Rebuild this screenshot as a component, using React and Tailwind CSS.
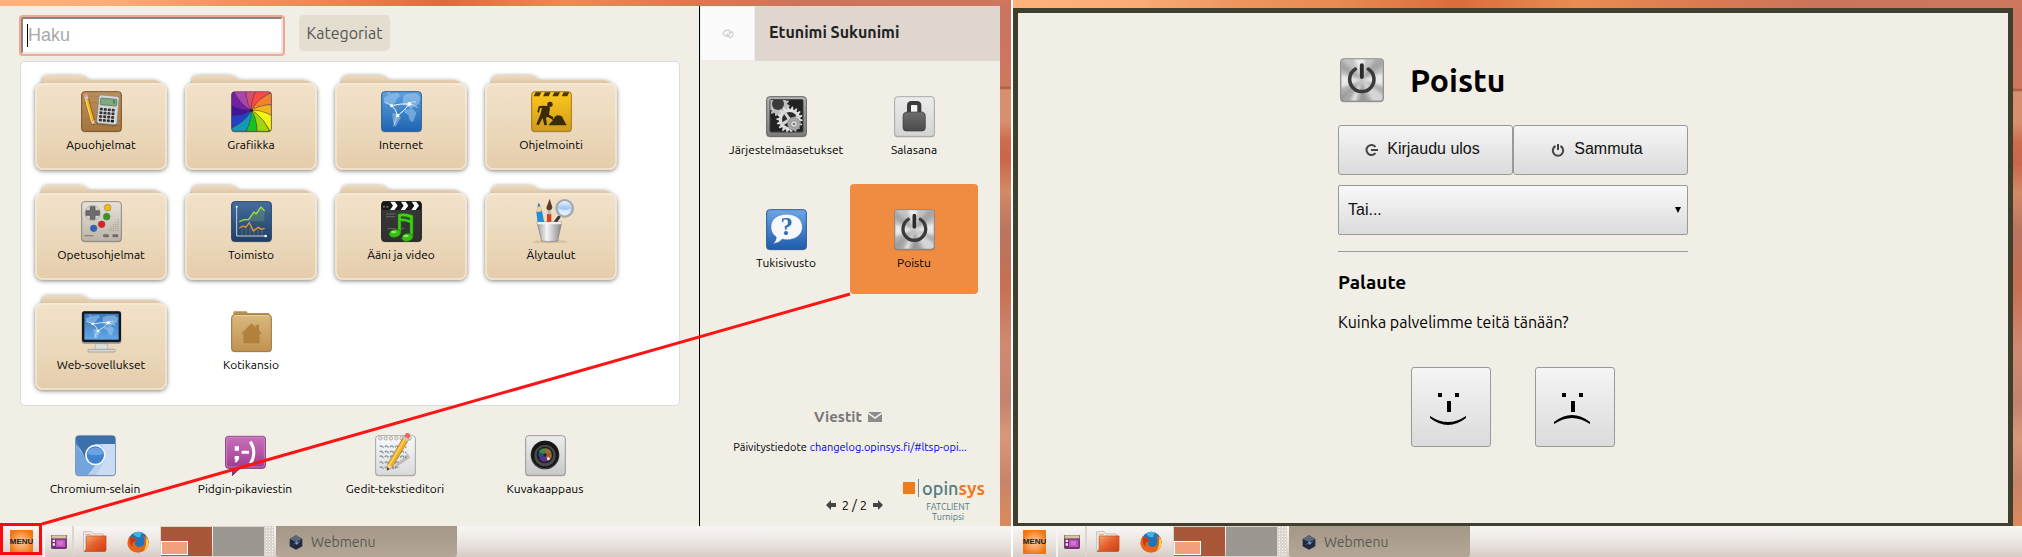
import React from "react";

/* ---------- icon artwork (drawn on a 123 unit square) ---------- */

function Art({ children, className = "h-[41px] w-[41px]" }) {
  return (
    <svg viewBox="0 0 123 123" className={`relative block overflow-visible ${className}`} aria-hidden="true">
      {children}
    </svg>
  );
}

function Tile({ id, from, to, edge = "#777" }) {
  return (
    <>
      <defs>
        <linearGradient id={id} x1="0" y1="0" x2="0" y2="1">
          <stop offset="0" stopColor={from} />
          <stop offset="1" stopColor={to} />
        </linearGradient>
      </defs>
      <rect x="1" y="4" width="121" height="120" rx="10" fill="#000" opacity=".3" />
      <rect x="2" y="2" width="119" height="119" rx="9" fill={`url(#${id})`} stroke={edge} strokeWidth="3" />
    </>
  );
}

function AccessoriesIcon() {
  const keys = [];
  for (let r = 0; r < 4; r++)
    for (let c = 0; c < 4; c++)
      keys.push(<rect key={`${r}${c}`} x={56 + c * 12} y={52 + r * 11} width="9" height="8" rx="2" fill={r === 3 && c === 3 ? "#111" : "#333"} />);
  return (
    <Art>
      <Tile id="acc" from="#b98f5c" to="#a5763f" edge="#77552c" />
      {[18, 37, 88, 104].map((y) => (
        <path key={y} d={`M4 ${y}q30-6 60 0t55 0`} stroke="#8c6233" strokeWidth="2" fill="none" opacity=".5" />
      ))}
      <g transform="rotate(-15 25 55)">
        <rect x="20" y="22" width="11" height="68" fill="#f5b31f" stroke="#7a4a10" strokeWidth="2" />
        <rect x="20" y="22" width="4" height="68" fill="#ffd863" />
        <rect x="20" y="14" width="11" height="9" fill="#c9ccd0" />
        <rect x="20" y="7" width="11" height="9" rx="3" fill="#ef8f83" />
        <path d="M20 90h11l-5 17z" fill="#ecd0a0" />
        <path d="M24 101l4 0-2 6z" fill="#111" />
      </g>
      <g transform="rotate(5 80 60)">
        <rect x="49" y="17" width="62" height="86" rx="6" fill="#5b3f1d" opacity=".6" />
        <rect x="50" y="14" width="61" height="85" rx="6" fill="#d4d6d5" stroke="#8b8b88" strokeWidth="2" />
        <rect x="56" y="23" width="49" height="20" rx="2" fill="#7ea981" stroke="#4c6b50" strokeWidth="2" />
        <path d="M97 28v9M93 28h5" stroke="#2c4730" strokeWidth="2" />
        {keys}
      </g>
    </Art>
  );
}

const WHEEL = ["#d4506f", "#fb4a45", "#f58030", "#f4b31f", "#f5f50f", "#9fd40f", "#15c423", "#1498b8", "#2340c8", "#3f15a0", "#7021a3", "#ab45ad"];

function GraphicsIcon() {
  const p = (deg, r) => {
    const a = (deg * Math.PI) / 180;
    return `${61 + r * Math.sin(a)} ${58 - r * Math.cos(a)}`;
  };
  return (
    <Art>
      <clipPath id="gfx-clip"><rect x="2" y="2" width="119" height="119" rx="8" /></clipPath>
      <rect x="1" y="4" width="121" height="120" rx="10" fill="#000" opacity=".4" />
      <g clipPath="url(#gfx-clip)">
        {WHEEL.map((c, i) => {
          const a = i * 30 - 8;
          return (
            <path key={c} d={`M61 58Q${p(a - 25, 45)} ${p(a, 95)}L${p(a + 30, 110)}Q${p(a + 5, 45)} 61 58z`} fill={c} stroke="#3b2030" strokeWidth="1" />
          );
        })}
      </g>
      <circle cx="61" cy="58" r="5" fill="#222" />
      <rect x="2" y="2" width="119" height="119" rx="9" fill="none" stroke="#4a2b50" strokeWidth="3" opacity=".6" />
    </Art>
  );
}

function WorldNet() {
  return (
    <>
      <path d="M8 22l16-12 26-4 8 8-10 9-4 11-12 9-10-2-12-9zM34 66l16 2 10 12-8 12-8 16-8-14zM66 18l10-9 30-2 12 12-4 20-14 6-10 10-10-8-14-9zM72 56l24-2 10 12-10 28-10-6-4-16-12-8zM16 6l8-3 6 2-8 5z" fill="#a9d0f3" opacity=".5" />
      <g stroke="#fff" strokeWidth="3" fill="none">
        <path d="M32 44q26-7 53-5Q72 58 50 74Q45 54 32 44" />
        <path d="M32 44Q20 36 10 34M85 39q14 2 24 10M50 74q-8 14-12 32M85 39q8-10 20-6" opacity=".6" />
      </g>
      <circle cx="32" cy="44" r="5" fill="#fff" />
      <circle cx="85" cy="39" r="6" fill="#fff" />
      <circle cx="50" cy="74" r="5" fill="#fff" />
    </>
  );
}

function InternetIcon() {
  return (
    <Art>
      <Tile id="net" from="#5da2de" to="#1f64b0" edge="#2b5f9b" />
      <WorldNet />
    </Art>
  );
}

function ProgrammingIcon() {
  return (
    <Art>
      <Tile id="dev" from="#fdc91f" to="#cf9a1a" edge="#a87c17" />
      {[14, 42, 70, 98].map((x) => (
        <path key={x} d={`M${x} 4h17l-6 12h-17z`} fill="#49380c" />
      ))}
      <g fill="#3a2c08">
        <circle cx="57" cy="40" r="8" />
        <path d="M34 44l18 1 5 6-3 20 13 7-2 6-16-6-4 2 3 22-8 1-5-22-12 22-7-3 13-32 4-18-6 2-3 13-5-2 4-17z" />
        <path d="M46 66l22 18-3 3-22-17zM52 103l14-16q6-13 14-14l12 2 15 28z" />
      </g>
    </Art>
  );
}

function LearningIcon() {
  return (
    <Art>
      <Tile id="edu" from="#e6e1da" to="#bcb4a8" edge="#908a80" />
      <circle cx="35" cy="36" r="23" fill="#d8d3ca" stroke="#a49f96" strokeWidth="2" />
      <path d="M28 17h14v12h13v14h-13v12h-14v-12h-13v-14h13z" fill="#6d6d6d" stroke="#4b4b4b" strokeWidth="2" />
      <circle cx="80" cy="20" r="10" fill="#f7b917" stroke="#9f8040" strokeWidth="2" />
      <circle cx="77" cy="47" r="10" fill="#35991b" stroke="#567b46" strokeWidth="2" />
      <circle cx="62" cy="70" r="10" fill="#e22020" stroke="#944545" strokeWidth="2" />
      <circle cx="38" cy="82" r="10" fill="#2a65b3" stroke="#476b92" strokeWidth="2" />
      {[0, 1, 2, 3, 4, 5].map((i) => (
        <path key={i} d={`M${76 + i * 7} ${91 - i * 7}V91`} stroke="#99938a" strokeWidth="3" strokeDasharray="3 3" />
      ))}
      <path d="M10 104h27" stroke="#8b857c" strokeWidth="4" />
      <rect x="66" y="100" width="18" height="9" rx="4" fill="#6e6e72" />
      <rect x="94" y="100" width="18" height="9" rx="4" fill="#6e6e72" />
    </Art>
  );
}

function OfficeIcon() {
  return (
    <Art>
      <Tile id="off" from="#456d9e" to="#203f66" edge="#28456a" />
      <path d="M25 62l14-6 14-1 16-19 5 5 16-20 10 12v28H25z" fill="#7fae6c" opacity=".3" />
      {[33, 45, 57, 69, 81, 93].map((x) => (
        <path key={x} d={`M${x} 82V103`} stroke="#d1a25c" strokeWidth="2" opacity=".55" />
      ))}
      <path d="M17 17V105H105" fill="none" stroke="#c6d5e4" strokeWidth="3" />
      <circle cx="17" cy="17" r="3" fill="#fff" /><circle cx="104" cy="105" r="4" fill="#fff" />
      <path d="M25 62l14-6 14-1 16-22 6 6 15-21 11 12" fill="none" stroke="#a1e03f" strokeWidth="4" />
      <path d="M25 81l11-6 8 4 11-14 12 25 15-11 8 6 11-3" fill="none" stroke="#ee9b24" strokeWidth="4" />
    </Art>
  );
}

function MediaIcon() {
  return (
    <Art>
      <Tile id="med" from="#383838" to="#303030" edge="#202020" />
      <rect x="2" y="1" width="119" height="26" rx="7" fill="#171717" />
      <path d="M28 2h14l8 12-10 13H27l9-13zM60 2h14l8 12-10 13H59l9-13zM92 2h14l8 12-10 13H91l9-13z" fill="#fff" />
      <circle cx="9" cy="17" r="3" fill="#777" /><circle cx="19" cy="17" r="3" fill="#777" />
      <path d="M15 39h28M15 47h28M20 83h26M60 83h10" stroke="#686868" strokeWidth="3" />
      <path fillRule="evenodd" d="M51 39q20-6 45 4v66H87V66Q74 60 60 60V96H51zM60 47v5q14 0 27 5v-6q-13-5-27-4z" fill="#42cf18" stroke="#1b7f0a" strokeWidth="2" />
      <ellipse cx="42" cy="97" rx="18" ry="12" fill="#39bd14" stroke="#176f08" strokeWidth="2" transform="rotate(-12 42 97)" />
      <ellipse cx="79" cy="109" rx="17" ry="12" fill="#39bd14" stroke="#176f08" strokeWidth="2" transform="rotate(-12 79 109)" />
      <ellipse cx="38" cy="93" rx="8" ry="4" fill="#a2f27e" opacity=".8" />
      <ellipse cx="75" cy="105" rx="8" ry="4" fill="#a2f27e" opacity=".8" />
    </Art>
  );
}

function WhiteboardIcon() {
  return (
    <Art>
      <defs>
        <linearGradient id="cup" x1="0" x2="1"><stop offset="0" stopColor="#999" /><stop offset=".4" stopColor="#f5f5f5" /><stop offset="1" stopColor="#858585" /></linearGradient>
        <linearGradient id="lens" x1="0" x2="0" y1="0" y2="1"><stop offset="0" stopColor="#f2f8ff" /><stop offset=".5" stopColor="#9fc7f1" /><stop offset="1" stopColor="#dcebfb" /></linearGradient>
      </defs>
      <ellipse cx="58" cy="122" rx="50" ry="5" fill="#b58f60" opacity=".35" />
      <path d="M16 32l7-26 10 23 7 38H20z" fill="#1f8fd8" />
      <path d="M16 32l7-26 10 23-8 4z" fill="#f2cf98" /><path d="M20 17l3-12 5 10z" fill="#1b6fae" />
      <path d="M48 38h13v28H48z" fill="#e03b17" /><rect x="50" y="26" width="9" height="14" fill="#bbb" />
      <path d="M46 20q4-10 10-27 4 14 8 25 0 9-9 10-9-1-9-8z" fill="#5b3c28" />
      <path d="M84 48L72 64" stroke="#393939" strokeWidth="9" strokeLinecap="round" />
      <circle cx="101" cy="22" r="25" fill="url(#lens)" stroke="#a4a6aa" strokeWidth="6" />
      <path d="M82 22q18 12 38 0-3 20-19 20t-19-20z" fill="#eef5ff" opacity=".7" />
      <path d="M18 63h74l-12 57q-25 4-48 0z" fill="url(#cup)" stroke="#7b7b7b" strokeWidth="2" />
      <path d="M18 63h74l-2 7H20z" fill="#f1f1f1" />
    </Art>
  );
}

function WebAppsIcon() {
  return (
    <Art>
      <defs>
        <linearGradient id="scr" x1="0" x2="0" y1="0" y2="1"><stop offset="0" stopColor="#3877bd" /><stop offset="1" stopColor="#61a7e5" /></linearGradient>
      </defs>
      <path d="M45 98h33l4 18H41z" fill="#dedede" stroke="#a4a4a4" strokeWidth="2" />
      <rect x="21" y="115" width="81" height="8" rx="2" fill="#d8d8d8" stroke="#8d8d8d" strokeWidth="2" />
      <rect x="2" y="1" width="119" height="97" rx="8" fill="#8b8e90" />
      <rect x="3" y="1" width="117" height="92" rx="7" fill="#15181a" />
      <rect x="10" y="8" width="103" height="78" fill="url(#scr)" />
      <g transform="translate(7 8) scale(.88 .7)"><WorldNet /></g>
    </Art>
  );
}

function HomeIcon() {
  return (
    <Art>
      <defs>
        <linearGradient id="home" x1="0" x2="0" y1="0" y2="1"><stop offset="0" stopColor="#d9b77d" /><stop offset="1" stopColor="#c19351" /></linearGradient>
      </defs>
      <path d="M7 16V5q0-4 4-4h34q4 0 5 5h62q5 0 5 10z" fill="#b98f50" />
      <rect x="1" y="16" width="121" height="108" rx="9" fill="#000" opacity=".3" />
      <rect x="2" y="12" width="119" height="109" rx="8" fill="url(#home)" stroke="#a17740" strokeWidth="3" />
      <path d="M9 14h105" stroke="#edd5a8" strokeWidth="3" />
      <path d="M30 68l32-31 12 12v-8h10v17l10 10H86v29H37V68z" fill="#ad7b36" opacity=".85" />
    </Art>
  );
}

function ChromiumIcon() {
  return (
    <Art>
      <Tile id="chr" from="#a9c8ea" to="#b9d2f0" edge="#6b8fbd" />
      <path d="M4 26L36 79 60 92 38 120H11q-8 0-8-8z" fill="#73a5dd" />
      <path d="M3 27V11q0-8 8-8h101q8 0 8 8V27H62q-25 2-29 35z" fill="#447bb3" />
      <path d="M3 12L33 76V60Q35 32 62 27H120V11q0-8-8-8H11q-8 0-8 9z" fill="#3c70a8" />
      <path d="M91 66q0 8-4 15L64 120h48q8 0 8-8V27H78q13 14 13 39z" fill="#c9dcf4" />
      <circle cx="61" cy="60" r="31" fill="#f5f9ff" />
      <circle cx="61" cy="60" r="26" fill="#4283d0" />
      <path d="M36 56a26 26 0 0 1 50 0q-26 10-50 0z" fill="#6aa3e3" />
    </Art>
  );
}

function PidginIcon() {
  return (
    <Art>
      <defs>
        <linearGradient id="pid" x1="0" x2="0" y1="0" y2="1"><stop offset="0" stopColor="#c772b8" /><stop offset=".45" stopColor="#b353a4" /><stop offset="1" stopColor="#8e2f85" /></linearGradient>
      </defs>
      <path d="M10 4h103q8 0 8 8v79q0 9-8 9H45L22 122l2-22H10q-8 0-8-9V12q0-8 8-8z" fill="url(#pid)" stroke="#7f3577" strokeWidth="3" />
      <rect x="5" y="6" width="113" height="90" rx="6" fill="none" stroke="#d79acb" strokeWidth="2" />
      <path d="M29 34h13v13H29zM29 63h13v9l-7 10h-6l3-8h-3zM50 47h22v9H50z" fill="#fff" />
      <path d="M76 20q21 33 0 66" fill="none" stroke="#fff" strokeWidth="9" />
    </Art>
  );
}

function GeditIcon() {
  return (
    <Art>
      <Tile id="ged" from="#fafafa" to="#dadada" edge="#aaa" />
      {[16, 32, 48, 64, 80, 104].map((x) => (
        <circle key={x} cx={x} cy="10" r="5" fill="#f0f0ea" stroke="#aaa69c" strokeWidth="3" />
      ))}
      {[35, 51, 65, 83, 98].map((y, i) => (
        <path key={y} d={`M14 ${y}q4-5 8 0t8 0 8 0 8 0 8 0 8 0 8 0${i < 3 ? " 8 0 8 0 8 0" : ""}`} stroke="#8097a4" strokeWidth="4" fill="none" strokeDasharray="14 4" />
      ))}
      <path d="M47 104L98 55l8 13-53 35z" fill="#000" opacity=".18" />
      <path d="M87 4l15 8-50 84-16 10 2-19z" fill="#f1af2b" stroke="#9d6c1c" strokeWidth="2" />
      <path d="M91 9L43 91" stroke="#ffd96a" strokeWidth="4" />
      <path d="M38 87l14 9-16 10z" fill="#efd5a8" /><path d="M37 97l7 5-8 4z" fill="#222" />
      <path d="M87 4l6-9q9-4 13 5l-4 12z" fill="#e5695e" /><path d="M87 4l15 8-4 7-15-9z" fill="#c7c9cd" />
    </Art>
  );
}

function ScreenshotIcon() {
  return (
    <Art>
      <Tile id="sho" from="#ececec" to="#c9c9c9" edge="#9d9d9d" />
      <circle cx="60" cy="60" r="43" fill="#3d3d3d" />
      <circle cx="60" cy="58" r="41" fill="#171717" />
      <circle cx="60" cy="62" r="32" fill="#4b4b4b" />
      <circle cx="60" cy="60" r="25" fill="#1b1b24" />
      <path d="M60 60L41 52Q46 39 60 40z" fill="#3e8a49" />
      <path d="M60 60V40q16 0 20 15z" fill="#9c6c32" />
      <path d="M60 60L80 55q4 18-12 24z" fill="#a35e35" />
      <path d="M60 60L68 79q-17 5-24-8z" fill="#5e3191" />
      <path d="M60 60L44 71q-6-9-3-19z" fill="#2a4a92" />
      <circle cx="60" cy="60" r="5" fill="#252525" /><circle cx="70" cy="71" r="4" fill="#fff" />
    </Art>
  );
}

function Gear({ cx, cy, r, n, fill }) {
  const pts = [];
  for (let i = 0; i < n * 4; i++) {
    const a = (i / (n * 4)) * Math.PI * 2;
    const rr = i % 4 < 2 ? r : r * 0.8;
    pts.push(`${(cx + rr * Math.cos(a)).toFixed(1)},${(cy + rr * Math.sin(a)).toFixed(1)}`);
  }
  return <polygon points={pts.join(" ")} fill={fill} />;
}

function SettingsIcon() {
  return (
    <Art>
      <Tile id="set" from="#b3b3b3" to="#7c7c7c" edge="#666" />
      <rect x="12" y="11" width="99" height="97" rx="3" fill="#222" stroke="#3d3d3d" strokeWidth="3" />
      <clipPath id="set-clip"><rect x="13" y="12" width="97" height="95" /></clipPath>
      <g clipPath="url(#set-clip)">
        <Gear cx={38} cy={28} r={33} n={14} fill="#bdbdbd" />
        <circle cx="36" cy="24" r="18" fill="#3a3a3a" />
        <Gear cx={71} cy={71} r={40} n={18} fill="#dedede" />
        <circle cx="71" cy="71" r="23" fill="#2b2b2b" />
        <path d="M71 71L55 48M71 71l31-9M71 71L47 85M71 71l11 30" stroke="#d2d2d2" strokeWidth="9" />
        <circle cx="84" cy="84" r="19" fill="#a9a9a9" stroke="#777" strokeWidth="2" />
        <circle cx="84" cy="84" r="10" fill="#dedede" stroke="#777" strokeWidth="2" />
        <circle cx="84" cy="84" r="4" fill="#777" />
      </g>
    </Art>
  );
}

function LockIcon() {
  return (
    <Art>
      <defs>
        <linearGradient id="lok" x1="0" x2="0" y1="0" y2="1"><stop offset="0" stopColor="#6e6e6e" /><stop offset="1" stopColor="#4a4a4a" /></linearGradient>
      </defs>
      <Tile id="lockt" from="#ececec" to="#d4d4d4" edge="#aaa" />
      <path d="M45 50V29q0-8 8-8h15q8 0 8 8V50" fill="#fff" fillOpacity=".6" stroke="#3c3c3c" strokeWidth="12" />
      <path d="M37 48h48q9 2 9 12v35q0 10-10 10H37q-10 0-10-10V60q0-10 10-12z" fill="url(#lok)" stroke="#3c3c3c" strokeWidth="2" />
    </Art>
  );
}

function HelpIcon() {
  return (
    <Art>
      <Tile id="hlp" from="#6da6e2" to="#1e5cad" edge="#2c5c97" />
      <path d="M62 16c28 0 47 15 47 38S90 92 62 92q-7 0-13-2-10 12-28 14 10-8 10-20-16-11-16-30c0-23 19-38 47-38z" fill="#f6f8fc" stroke="#245fa9" strokeWidth="1" />
      <text x="62" y="79" textAnchor="middle" fontFamily="Liberation Serif, serif" fontWeight="700" fontSize="74" fill="#356fb2">?</text>
    </Art>
  );
}

function PowerIcon({ id, className }) {
  return (
    <Art className={className}>
      <Tile id={id} from="#c6c6c6" to="#a6a6a6" edge="#8a8a8a" />
      <clipPath id={`${id}-c`}><rect x="4" y="4" width="115" height="115" rx="7" /></clipPath>
      <filter id={`${id}-b`}><feGaussianBlur stdDeviation="4" /></filter>
      <g clipPath={`url(#${id}-c)`}>
        <g filter={`url(#${id}-b)`}>
          <path d="M61 61L0 45V85zM61 61L123 40V80zM61 61L40 0H70zM61 61L45 123H28z" fill="#fff" opacity=".7" />
          <path d="M61 61L0 0V30zM61 61L100 0h23V20zM61 61L55 123H75zM61 61L0 110v13z" fill="#7a7a7a" opacity=".4" />
          <path d="M61 61L90 123h33V105z" fill="#f4f4f4" opacity=".6" />
        </g>
      </g>
      <path d="M43 31a34 34 0 1 0 36 0" fill="none" stroke="#3a3a3a" strokeWidth="10" strokeLinecap="round" />
      <path d="M61 20V53" stroke="#2b2b2b" strokeWidth="11" strokeLinecap="round" />
    </Art>
  );
}

/* ---------- launcher pieces ---------- */

function FolderShape() {
  return (
    <svg viewBox="0 0 150 110" className="absolute inset-0 h-full w-full overflow-visible" aria-hidden="true">
      <defs>
        <linearGradient id="fold" x1="0" y1="0" x2="0" y2="1"><stop offset="0" stopColor="#f2e2ca" /><stop offset=".5" stopColor="#ecd9bc" /><stop offset="1" stopColor="#e4ccab" /></linearGradient>
        <linearGradient id="foldtab" x1="0" y1="0" x2="0" y2="1"><stop offset="0" stopColor="#eedcc0" /><stop offset="1" stopColor="#d8bf9c" /></linearGradient>
        <filter id="foldsh" x="-10%" y="-10%" width="120%" height="125%"><feDropShadow dx="0" dy="1" stdDeviation="2" floodColor="#000" floodOpacity=".5" /></filter>
      </defs>
      <g filter="url(#foldsh)">
        <path d="M16 20V14q0-5 6-5H53q5 0 10 5H128q6 0 7 6z" fill="url(#foldtab)" />
        <rect x="9" y="17" width="132" height="87" rx="8" fill="url(#fold)" />
      </g>
      <rect x="10" y="18" width="130" height="85" rx="7" fill="none" stroke="#f8ecd8" strokeWidth="1.5" opacity=".8" />
    </svg>
  );
}

function Launcher({ icon, label, folder, className = "w-[150px]" }) {
  return (
    <button type="button" className={`relative flex h-[110px] flex-col items-center pt-[25px] text-[12px] leading-4 text-black ${className}`}>
      {folder && <FolderShape />}
      {icon}
      <span className="relative mt-[5px] whitespace-nowrap">{label}</span>
    </button>
  );
}

const FOLDERS = [
  ["Apuohjelmat", <AccessoriesIcon />],
  ["Grafiikka", <GraphicsIcon />],
  ["Internet", <InternetIcon />],
  ["Ohjelmointi", <ProgrammingIcon />],
  ["Opetusohjelmat", <LearningIcon />],
  ["Toimisto", <OfficeIcon />],
  ["Ääni ja video", <MediaIcon />],
  ["Älytaulut", <WhiteboardIcon />],
  ["Web-sovellukset", <WebAppsIcon />],
];

const FAVOURITES = [
  ["Chromium-selain", <ChromiumIcon />],
  ["Pidgin-pikaviestin", <PidginIcon />],
  ["Gedit-tekstieditori", <GeditIcon />],
  ["Kuvakaappaus", <ScreenshotIcon />],
];

function MenuWindow() {
  return (
    <div className="flex flex-1 bg-[#f1eee6]">
      <main className="flex min-w-0 flex-1 flex-col border-r border-black pl-5 pr-[19px]">
        <div className="flex h-[55px] items-start gap-4 pt-[9px]">
          <div className="relative pl-px pt-[2px]">
            <input
              type="text"
              aria-label="Haku"
              placeholder="Haku"
              className="block h-[37px] w-[262px] rounded-[2px] border-2 border-t-[#858585] border-l-[#858585] border-r-[#e8e8e8] border-b-[#e8e8e8] bg-white px-[5px] font-['Liberation_Sans',sans-serif] text-[18px] outline-2 outline-[#f3a68d] placeholder:text-[#a9a9a9]"
            />
            <span className="absolute left-[7px] top-[9px] h-[23px] w-px bg-black" />
          </div>
          <button type="button" className="h-9 w-[91px] rounded-[5px] bg-[#e3ded0] text-[16px] text-[#555]">Kategoriat</button>
        </div>
        <div className="flex flex-1 flex-wrap content-start rounded-[5px] border border-[#dcdcdc] bg-white px-[5px] pb-2 pt-1">
          {FOLDERS.map(([label, icon]) => (
            <Launcher key={label} label={label} icon={icon} folder />
          ))}
          <Launcher label="Kotikansio" icon={<HomeIcon />} />
        </div>
        <div className="flex pb-[6px] pt-1">
          {FAVOURITES.map(([label, icon]) => (
            <Launcher key={label} label={label} icon={icon} />
          ))}
        </div>
      </main>
      <aside className="flex w-[300px] flex-col">
        <header className="flex h-[55px] items-stretch bg-[#dfd6d0]">
          <div className="flex w-[55px] items-center justify-center border border-[#ececec] bg-[#fbfbfb]">
            <svg viewBox="0 0 36 30" className="h-[10px] w-3" fill="none" stroke="#d3d3d3" strokeWidth="4" aria-hidden="true">
              <path d="M12 22L3 15 7 6 19 3 26 8 22 18zM20 10L31 9 33 19 26 26 14 21 18 13" />
            </svg>
          </div>
          <h2 className="pl-[14px] pt-[16px] text-[16px] font-semibold leading-5 text-[#222]">Etunimi Sukunimi</h2>
        </header>
        <div className="grid grid-cols-2 gap-y-[3px] px-[22px] pt-[10px]">
          <Launcher className="w-full" label="Järjestelmäasetukset" icon={<SettingsIcon />} />
          <Launcher className="w-full" label="Salasana" icon={<LockIcon />} />
          <Launcher className="w-full" label="Tukisivusto" icon={<HelpIcon />} />
          <Launcher className="w-full rounded-[4px] bg-[#f08c42]" label="Poistu" icon={<PowerIcon id="pw1" />} />
        </div>
        <div className="mt-auto">
          <h3 className="flex items-center justify-center gap-[6px] pr-1 text-[15px] font-bold leading-6 text-[#777]">
            Viestit
            <svg viewBox="0 0 14 10" className="h-[10px] w-[14px]" aria-hidden="true">
              <path d="M0 0h14L7 5z" fill="#8b8b8b" /><path d="M0 2l7 5 7-5v8H0z" fill="#8b8b8b" />
            </svg>
          </h3>
          <p className="mt-[10px] flex justify-center gap-[3px] text-[11px] leading-4 text-black">
            Päivitystiedote
            <a href="#changelog" className="text-[#0000ee]">changelog.opinsys.fi/#ltsp-opi...</a>
          </p>
        </div>
        <footer className="flex items-end justify-end pb-1 pr-[15px] pt-6">
          <div className="mb-[9px] mr-5 flex items-center gap-[6px] text-[13px] leading-4 text-black">
            <button type="button" aria-label="Edellinen">
              <svg viewBox="0 0 10 10" className="h-[10px] w-[10px]" fill="#444" aria-hidden="true"><path d="M0 5l5-5v3h5v4H5v3z" /></svg>
            </button>
            <span>2 / 2</span>
            <button type="button" aria-label="Seuraava">
              <svg viewBox="0 0 10 10" className="h-[10px] w-[10px]" fill="#444" aria-hidden="true"><path d="M10 5L5 0v3H0v4h5v3z" /></svg>
            </button>
          </div>
          <div className="flex flex-col items-center gap-[5px]">
            <div className="flex items-center gap-[3px]">
              <span className="h-3 w-3 bg-[#ee7a1c]" />
              <span className="h-[18px] w-px bg-[#6d8f92]" />
              <span className="text-[18px] font-medium leading-[18px] text-[#4f7b80]">opin<span className="font-bold text-[#ee7a22]">sys</span></span>
            </div>
            <div className="pl-2 text-center text-[9px] leading-[10px] text-[#4f7b80]">
              FATCLIENT<br />Turnipsi
            </div>
          </div>
        </footer>
      </aside>
    </div>
  );
}

/* ---------- taskbar ---------- */

function Taskbar({ highlight }) {
  return (
    <nav className="relative flex h-[31px] items-stretch bg-linear-to-b from-[#f8f6f4] via-[#ece6e2] to-[#d7cdc6]">
      <button type="button" className="relative flex w-[43px] items-center justify-center">
        <span className="flex h-6 w-[23px] items-center justify-center bg-[radial-gradient(circle,#f8c79c_0%,#f5a25c_40%,#ef7714_75%)] font-['Liberation_Sans',sans-serif] text-[8px] font-bold text-[#222]">MENU</span>
        {highlight && <span className="absolute -top-[3px] bottom-[2px] left-0 right-px border-3 border-[#fb0b0b]" />}
      </button>
      <button type="button" aria-label="Työpöytä" className="flex w-[31px] items-center justify-center border-x-2 border-[#dcd6d0] border-l-[#f6f4f2]">
        <svg viewBox="0 0 48 42" className="h-[14px] w-4" aria-hidden="true">
          <rect x="1" y="1" width="46" height="40" rx="4" fill="#7b2a7c" stroke="#4f2350" strokeWidth="2" />
          <rect x="1" y="0" width="46" height="11" rx="3" fill="#d5c4a9" stroke="#6b5a46" strokeWidth="2" />
          <rect x="15" y="14" width="28" height="22" fill="#c251c1" /><rect x="20" y="18" width="16" height="13" fill="#d98ad5" opacity=".6" />
          <path d="M5 14h7v7H5zM5 25h7v7H5z" fill="#eee" />
        </svg>
      </button>
      <button type="button" aria-label="Tiedostot" className="flex w-[42px] items-center justify-center">
        <svg viewBox="0 0 75 65" className="h-[21px] w-6" aria-hidden="true">
          <defs><linearGradient id={`tf${highlight}`} x1="0" y1="0" x2="1" y2="1"><stop offset="0" stopColor="#f3ae78" /><stop offset=".5" stopColor="#e4602c" /><stop offset="1" stopColor="#cc3c12" /></linearGradient></defs>
          <path d="M2 2h24l5 7h32v14H10v40H4Q2 60 2 56z" fill="#f4f1ee" stroke="#a9a39e" strokeWidth="2" />
          <path d="M7 10h18" stroke="#ef9b73" strokeWidth="3" />
          <path d="M10 15h62v43q0 6-6 6H4q6-4 6-12z" fill={`url(#tf${highlight})`} stroke="#b84218" strokeWidth="2" />
        </svg>
      </button>
      <button type="button" aria-label="Firefox" className="flex w-[44px] items-center justify-center">
        <svg viewBox="0 0 66 66" className="h-[22px] w-[22px]" aria-hidden="true">
          <circle cx="34" cy="31" r="29" fill="#1d76bd" />
          <path d="M18 8q14-10 30-2-10 2-6 10-10 8-24-8z" fill="#49b1e4" />
          <path d="M52 10q14 10 13 27Q61 64 34 65 5 63 1 38q0-15 8-24 1 7 4 8 5-4 12-3l-2 7 8 3q-8 1-8 8 3 11 14 11 14-2 15-13 2-13-4-21 6 3 9 9 1-6-5-13z" fill="#e5641a" />
          <path d="M56 14q9 11 8 24-2 14-14 21 9-14 7-27 3-8-1-18z" fill="#fbd545" />
          <path d="M9 14q1 7 4 8 5-4 12-3l-2 7 8 3-12 4q-5 8-3 14Q6 40 9 14z" fill="#c93a12" />
        </svg>
      </button>
      <div className="flex items-stretch gap-px border border-[#dcd4cc]">
        <button type="button" aria-label="Työtila 1" className="flex w-[51px] items-end bg-[#a85839] pb-px">
          <span className="h-[14px] w-[27px] border border-white bg-[#f2a07b]" />
        </button>
        <button type="button" aria-label="Työtila 2" className="w-[51px] bg-[#9c9790]" />
      </div>
      <span className="mr-[2px] w-[9px] bg-[radial-gradient(#fff_35%,#dcd5cf_40%)] bg-[length:3px_3px]" />
      <button type="button" className="flex w-[181px] items-center gap-2 rounded-b-[3px] bg-linear-to-b from-[#a59888] to-[#b5a698] pl-[13px] pt-[2px] text-[14px] text-[#57584e]">
        <svg viewBox="0 0 42 45" className="h-[15px] w-[14px]" aria-hidden="true">
          <path d="M21 1l19 11v22L21 44 2 34V12z" fill="#23293a" /><path d="M21 1l19 11-19 9L2 12z" fill="#5c6878" />
          <path d="M10 31l14-13 2 5 10-7-13 14-3-5z" fill="#66a2e0" />
        </svg>
        Webmenu
      </button>
    </nav>
  );
}

/* ---------- log-out dialog ---------- */

function Face({ label, mouth }) {
  return (
    <button type="button" aria-label={label} className="h-20 w-20 rounded-[3px] border border-[#999] bg-linear-to-b from-[#f5f5f5] to-[#dbdbdb]">
      <svg viewBox="0 0 80 80" className="-m-px h-20 w-20" aria-hidden="true">
        <path d="M27 26h4v4h-4zM44 26h4v4h-4zM36 34h4v11h-4z" />
        <path d={mouth} />
      </svg>
    </button>
  );
}

function ExitWindow() {
  const button = "flex h-[50px] flex-1 items-center justify-center gap-[9px] rounded-[3px] border border-[#999] bg-linear-to-b from-[#f5f5f5] to-[#dbdbdb] pb-[3px] pr-[7px] font-['Liberation_Sans',sans-serif] text-[16px] text-[#111]";
  return (
    <main className="flex flex-1 justify-center border-5 border-b-3 border-[#3e3f2d] bg-[#f1eee6]">
      <div className="w-[350px] pt-[44px] text-black">
        <div className="flex h-[46px] items-center gap-6">
          <PowerIcon id="pw2" className="ml-[2px] h-[44px] w-[44px]" />
          <h1 className="pl-[2px] text-[32px] font-bold leading-10">Poistu</h1>
        </div>
        <div className="mt-[22px] flex">
          <button type="button" className={button}>
            <svg viewBox="0 0 14 14" className="mt-[2px] h-[14px] w-[14px]" fill="none" stroke="#444" strokeWidth="2" aria-hidden="true">
              <path d="M11.500 4A5 5 0 1 0 11.500 10M7 7h7" />
            </svg>
            Kirjaudu ulos
          </button>
          <button type="button" className={button}>
            <svg viewBox="0 0 14 14" className="mt-[2px] h-[14px] w-[14px]" fill="none" stroke="#444" strokeWidth="2" aria-hidden="true">
              <path d="M4.500 3A5.200 5.200 0 1 0 9.500 3M7 1v6" />
            </svg>
            Sammuta
          </button>
        </div>
        <div className="relative mt-[10px]">
          <select aria-label="Muut toiminnot" className="block h-[50px] w-full appearance-none rounded-[2px] border border-[#999] bg-linear-to-b from-[#f9f9f9] to-[#dbdbdb] px-[9px] font-['Liberation_Sans',sans-serif] text-[16px] text-[#111]">
            <option>Tai...</option>
          </select>
          <svg viewBox="0 0 6 6" className="pointer-events-none absolute right-[7px] top-[22px] h-[6px] w-[6px]" aria-hidden="true"><path d="M0 0h6L3 6z" /></svg>
        </div>
        <hr className="mt-4 border-t border-[#999]" />
        <h2 className="mt-[18px] text-[19px] font-bold leading-6">Palaute</h2>
        <p className="mt-4 text-[16px] leading-6">Kuinka palvelimme teitä tänään?</p>
        <div className="mt-[33px] flex justify-center gap-11">
          <Face label="Tyytyväinen" mouth="M19 49q18 12 36 0v2q-18 14-36 0z" />
          <Face label="Tyytymätön" mouth="M19 57q18-12 36 0v-2q-18-14-36 0z" />
        </div>
      </div>
    </main>
  );
}

const SKY = "bg-[linear-gradient(90deg,#ffb27c_0%,#fbac76_12%,#ee9560_22%,#e98a52_32%,#db6c3c_44%,#e98d52_56%,#db7a50_68%,#cb745c_80%,#cf765e_100%)]";
const SIDE = "bg-[linear-gradient(180deg,#cb7460_0px,#cf765e_80px,#a8573f_82px,#d6906f_84px,#d88f6e_115px,#cc6b4d_135px,#c9664c_155px,#d38a66_185px,#b9745f_225px,#c76f53_280px,#d08a72_340px,#c4836f_395px,#d9977a_430px,#c8846a_475px,#d8895e_510px)]";

export default function App() {
  return (
    <div className="grid min-h-screen w-full grid-cols-2 bg-white font-['Ubuntu','Noto_Sans',sans-serif]">
      <section className="relative flex min-w-0 flex-col">
        <div className={`h-[6px] ${SKY}`} />
        <div className="flex flex-1">
          <MenuWindow />
          <div className={`w-[11px] ${SIDE}`} />
        </div>
        <Taskbar highlight />
        <svg viewBox="0 0 808 230" preserveAspectRatio="none" className="pointer-events-none absolute left-[42px] top-[294px] h-[230px] w-[calc(100%-203px)] overflow-visible" aria-hidden="true">
          <path d="M0 230L808 0" stroke="#fb1414" strokeWidth="3" />
        </svg>
      </section>
      <section className="flex min-w-0 flex-col border-l-2 border-white">
        <div className={`h-[8px] ${SKY}`} />
        <div className="flex flex-1">
          <ExitWindow />
          <div className={`w-[9px] ${SIDE}`} />
        </div>
        <Taskbar />
      </section>
    </div>
  );
}
